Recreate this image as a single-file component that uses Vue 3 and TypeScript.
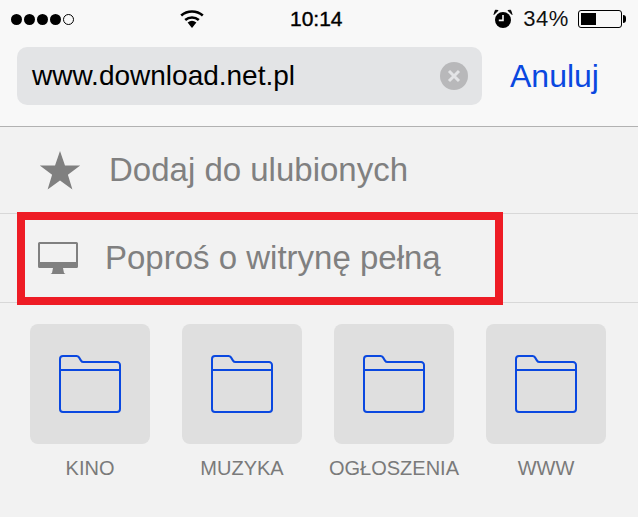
<template>
  <div class="page">
    <header class="top">
      <div class="status">
        <div class="signal">
          <i v-for="n in 4" :key="n" class="dot"></i>
          <i class="dot empty"></i>
        </div>
        <svg class="wifi" width="26" height="20" viewBox="0 0 26 20">
          <path d="M13 19 8.6 13.6a7 7 0 0 1 8.8 0Z" fill="#000" />
          <path d="M6.2 11a10.5 10.5 0 0 1 13.6 0M2.2 6.6a16.4 16.4 0 0 1 21.6 0" fill="none" stroke="#000" stroke-width="2.6" />
        </svg>
        <span class="time">10:14</span>
        <div class="right">
          <svg class="alarm" width="20" height="20" viewBox="0 0 20 20">
            <circle cx="10" cy="11" r="8" fill="#000" />
            <path d="M10 6v5.4H5.8" fill="none" stroke="#f8f8f8" stroke-width="1.6" />
            <path d="M1 5.5 5 1.5 2.4 1.2ZM19 5.500 15 1.500 17.600 1.200Z" fill="#000" stroke="#000" />
          </svg>
          <span class="pct">34%</span>
          <div class="battery"><div class="charge" :style="{ width: level + '%' }"></div></div>
          <i class="nub"></i>
        </div>
      </div>
      <div class="search">
        <div class="url">
          <span class="url-text">www.download.net.pl</span>
          <svg class="clear" width="28" height="28" viewBox="0 0 28 28">
            <circle cx="14" cy="14" r="14" fill="#b8b8ba" />
            <path d="M9 9l10 10M19 9 9 19" stroke="#e3e4e6" stroke-width="3" />
          </svg>
        </div>
        <span class="cancel">Anuluj</span>
      </div>
    </header>

    <div class="menu-row first">
      <svg class="star" width="42" height="40" viewBox="0 0 42 40">
        <path d="M21 1l5 14.600h15.200L28.900 24.800 33.400 39.500 21 30.600 8.600 39.500 13.100 24.800.8 15.600H16Z" fill="#808080" />
      </svg>
      <span>Dodaj do ulubionych</span>
    </div>
    <div class="menu-row second">
      <svg class="monitor" width="40" height="32" viewBox="0 0 40 32">
        <path d="M1.500 0h37A1.500 1.500 0 0 1 40 1.500v23a1.500 1.500 0 0 1-1.500 1.500h-37A1.500 1.500 0 0 1 0 24.500v-23A1.500 1.500 0 0 1 1.500 0Zm.5 2v18h36V2Z" fill="#808080" fill-rule="evenodd" />
        <path d="M15 26h10l1 5 1.500 1h-15l1.500-1Z" fill="#808080" />
      </svg>
      <span>Poproś o witrynę pełną</span>
    </div>

    <div class="grid">
      <div v-for="item in folders" :key="item" class="tile">
        <div class="thumb">
          <svg width="62" height="58" viewBox="0 0 62 58">
            <path d="M1 20V4a3 3 0 0 1 3-3h13.500a3 3 0 0 1 2.500 1.400l2 3.200a3 3 0 0 0 2.500 1.400H58a3 3 0 0 1 3 3V54a3 3 0 0 1-3 3H4a3 3 0 0 1-3-3ZM1 15h60" fill="none" stroke="#0a48e0" stroke-width="2" />
          </svg>
        </div>
        <div class="label">{{ item }}</div>
      </div>
    </div>

    <div class="highlight"></div>
  </div>
</template>

<script setup lang="ts">
const level = 40
const folders: string[] = ['KINO', 'MUZYKA', 'OGŁOSZENIA', 'WWW']
</script>

<style>
html, body { margin: 0; background: #f2f2f2; }
</style>

<style scoped>
.page {
  position: relative;
  width: 638px;
  height: 517px;
  overflow: hidden;
  background: #f2f2f2;
  font-family: "Liberation Sans", Arial, sans-serif;
}
.top {
  height: 126px;
  background: #f8f8f8;
  border-bottom: 1px solid #b2b2b2;
}
.status {
  position: relative;
  height: 40px;
  display: flex;
  align-items: center;
  padding: 0 12px 2px 11px;
  box-sizing: border-box;
}
.signal { display: flex; gap: 2px; width: 167px; }
.dot { width: 11px; height: 11px; border-radius: 50%; background: #000; box-sizing: border-box; }
.dot.empty { background: none; border: 1px solid #000; }
.wifi { margin-left: 1px; }
.time {
  margin-left: 85px;
  font-size: 21px;
  font-weight: 400;
  color: #000;
  -webkit-text-stroke: 0.4px #000;
}
.right { margin-left: auto; display: flex; align-items: center; }
.pct { margin-left: 10px; margin-right: 9px; font-size: 22px; color: #111; letter-spacing: 0.6px; }
.battery { width: 44px; height: 18px; border: 1px solid #000; border-radius: 3px; padding: 2px; box-sizing: border-box; }
.charge { height: 100%; background: #000; }
.nub { width: 3px; height: 8px; background: #000; margin-left: 1px; border-radius: 0 4px 4px 0; }
.search { display: flex; align-items: center; padding: 7px 0 0 17px; }
.url {
  width: 465px;
  height: 58px;
  background: #e3e4e6;
  border-radius: 10px;
  display: flex;
  align-items: center;
  justify-content: space-between;
  padding: 0 14px 0 15px;
  box-sizing: border-box;
}
.url-text { font-size: 28px; color: #000; }
.cancel { margin-left: 28px; font-size: 32px; color: #0a48e0; }
.menu-row {
  display: flex;
  align-items: center;
  color: #808080;
  font-size: 33px;
  box-sizing: border-box;
}
.menu-row.first { height: 87px; padding-left: 39px; gap: 28px; border-bottom: 1px solid #d8d8d8; }
.menu-row.second { height: 89px; padding-left: 38px; gap: 27px; border-bottom: 1px solid #d8d8d8; }
.grid { display: flex; gap: 32px; padding: 21px 0 0 30px; }
.tile { width: 120px; display: flex; flex-direction: column; align-items: center; }
.thumb {
  width: 120px;
  height: 120px;
  background: #dfdfdf;
  border-radius: 8px;
  display: flex;
  align-items: center;
  justify-content: center;
}
.label {
  width: 132px;
  margin-top: 9px;
  font-size: 20px;
  line-height: 30px;
  text-align: center;
  color: #7a7a7a;
  word-break: break-all;
}
.highlight {
  position: absolute;
  left: 17px;
  top: 212px;
  width: 486px;
  height: 93px;
  border: 8px solid #ee1c25;
  box-sizing: border-box;
}
</style>
